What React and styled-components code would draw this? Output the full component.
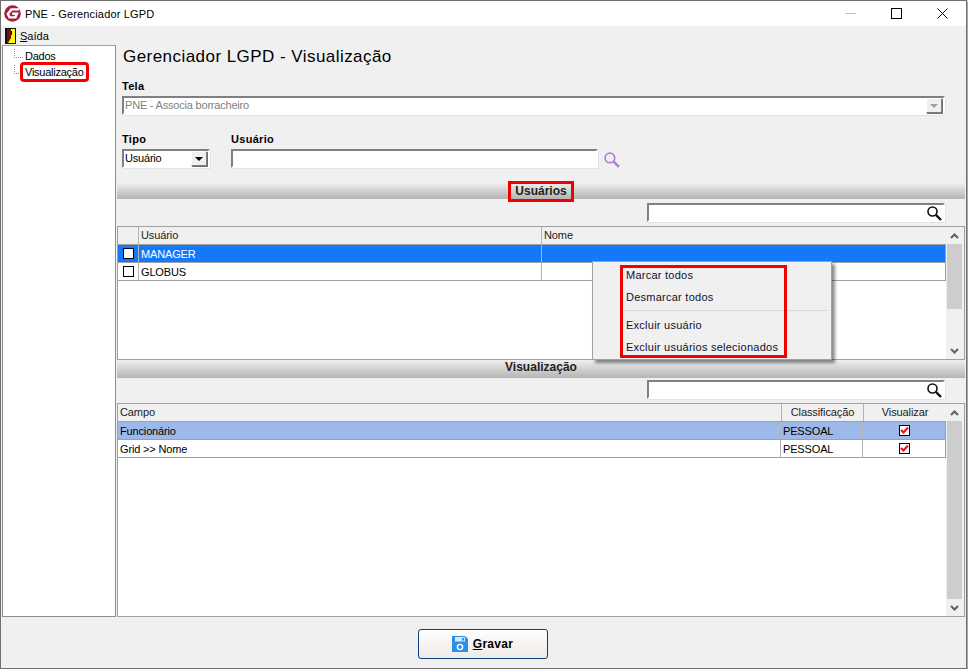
import styled, { createGlobalStyle } from 'styled-components';

const GlobalStyle = createGlobalStyle`
  html, body { margin: 0; padding: 0; background: #fff; }
  body { font-family: "Liberation Sans", Arial, sans-serif; font-size: 11px; color: #000; }
  * { box-sizing: border-box; }
`

const usuarios = ['MANAGER', 'GLOBUS'];
const campos = [
  { nome: 'Funcionário', classe: 'PESSOAL', marked: true },
  { nome: 'Grid >> Nome', classe: 'PESSOAL' },
];

function SearchIcon({ color = '#111', size = 16 }) {
  return (
    <svg width={size} height={size} viewBox="0 0 16 16" fill="none">
      <circle cx="6.5" cy="6.5" r="4.5" stroke={color} strokeWidth="1.6" />
      <path d="M10 10l5 5" stroke={color} strokeWidth="2.4" />
    </svg>
  );
}

function Logo() {
  return (
    <svg width="17" height="17" viewBox="0 0 17 17">
      <circle cx="8.5" cy="8.5" r="8.3" fill="#a3203c" />
      <path d="M15 4.4H7.4L3.8 9l1.8 3.4h5.8l1.6-3.6H8.2" fill="none" stroke="#fff" strokeWidth="2.4" />
    </svg>
  );
}

function ExitIcon() {
  return (
    <svg width="11" height="16" viewBox="0 0 11 16">
      <rect x="0" y="0" width="11" height="16" fill="#111" />
      <rect x="1" y="1" width="9" height="14" fill="#ffff00" />
      <path d="M1 1h5v9l-3 5H1z" fill="#7a1010" />
      <rect x="6" y="3" width="1" height="4" fill="#111" />
      <rect x="1" y="1" width="1" height="14" fill="#111" />
    </svg>
  );
}

function SaveIcon() {
  return (
    <svg width="16" height="16" viewBox="0 0 16 16">
      <path d="M0 0h13l3 3v13H0z" fill="#2f8fe6" />
      <rect x="3" y="1" width="10" height="4.5" fill="#d6e8f8" />
      <rect x="10" y="2" width="2" height="2.5" fill="#2f8fe6" />
      <circle cx="8" cy="11" r="2.6" fill="none" stroke="#fff" strokeWidth="1.4" />
    </svg>
  );
}

function Arrow({ up, color = '#606060' }) {
  return (
    <svg width="9" height="6" viewBox="0 0 9 6" fill="none">
      <path d={up ? 'M1 5l3.5-3.5L8 5' : 'M1 1l3.5 3.5L8 1'} stroke={color} strokeWidth="2" />
    </svg>
  );
}

function Check() {
  return (
    <CheckBox>
      <svg width="9" height="9" viewBox="0 0 9 9" fill="none">
        <path d="M1 4l2.5 2.5L8 1.5" stroke="#f01020" strokeWidth="2.2" />
      </svg>
    </CheckBox>
  );
}

function ScrollBar({ thumb }) {
  return (
    <Scroll>
      <ScrollButton><Arrow up /></ScrollButton>
      <ScrollTrack><ScrollThumb $height={thumb} /></ScrollTrack>
      <ScrollButton><Arrow /></ScrollButton>
    </Scroll>
  );
}

function App() {
  return (
    <Window>
      <GlobalStyle />
      <TitleBar>
        <Logo />
        <TitleText>PNE - Gerenciador LGPD</TitleText>
        <WindowButtons>
          <WinButton>
            <svg width="11" height="11" viewBox="0 0 11 11"><path d="M0 5.5h11" stroke="#c0c0c0" /></svg>
          </WinButton>
          <WinButton>
            <svg width="11" height="11" viewBox="0 0 11 11" fill="none"><rect x="0.5" y="0.5" width="10" height="10" stroke="#000" /></svg>
          </WinButton>
          <WinButton>
            <svg width="11" height="11" viewBox="0 0 11 11" fill="none"><path d="M0.5 0.5l10 10M10.5 0.5l-10 10" stroke="#000" /></svg>
          </WinButton>
        </WindowButtons>
      </TitleBar>
      <MenuBar>
        <ExitIcon />
        <MenuLabel><u>S</u>aída</MenuLabel>
      </MenuBar>
      <Body>
        <Tree>
          <TreeRow>
            <Connector />
            <TreeLabel>Dados</TreeLabel>
          </TreeRow>
          <TreeRow>
            <Connector />
            <TreeLabel $marked>Visualização</TreeLabel>
          </TreeRow>
        </Tree>
        <Main>
          <Heading>Gerenciador LGPD - Visualização</Heading>
          <FormArea>
            <FieldLabel>Tela</FieldLabel>
            <Field $width="823px">
              <DisabledText>PNE - Associa borracheiro</DisabledText>
              <DropButton $disabled />
            </Field>
            <FormRow>
              <Column>
                <FieldLabel>Tipo</FieldLabel>
                <Field $width="88px">
                  <span>Usuário</span>
                  <DropButton />
                </Field>
              </Column>
              <Column>
                <FieldLabel>Usuário</FieldLabel>
                <UserLine>
                  <Field $width="367px" />
                  <SearchIcon color="#b57ad6" size="17" />
                </UserLine>
              </Column>
            </FormRow>
          </FormArea>

          <SectionBar><SectionText $marked>Usuários</SectionText></SectionBar>
          <FilterRow>
            <Field $width="298px">
              <span />
              <SearchIcon />
            </Field>
          </FilterRow>
          <Grid $height="134px">
            <GridBody>
              <HeaderRow $columns="21px 403px 1fr">
                <HeaderCell />
                <HeaderCell $left>Usuário</HeaderCell>
                <HeaderCell $left>Nome</HeaderCell>
              </HeaderRow>
              {usuarios.map((nome, i) => (
                <DataRow key={nome} $columns="21px 403px 1fr" $bg={i === 0 ? '#1478fa' : '#fff'} $color={i === 0 ? '#fff' : '#000'}>
                  <Cell $center><EmptyBox /></Cell>
                  <Cell>{nome}</Cell>
                  <Cell />
                </DataRow>
              ))}
            </GridBody>
            <ScrollBar thumb="65px" />
            <ContextMenu>
              <MenuMarks>
                <MenuItem>Marcar todos</MenuItem>
                <MenuItem>Desmarcar todos</MenuItem>
                <MenuSeparator />
                <MenuItem>Excluir usuário</MenuItem>
                <MenuItem>Excluir usuários selecionados</MenuItem>
              </MenuMarks>
            </ContextMenu>
          </Grid>

          <SectionBar $small><SectionText>Visualização</SectionText></SectionBar>
          <FilterRow $short>
            <Field $width="298px">
              <span />
              <SearchIcon />
            </Field>
          </FilterRow>
          <Grid $height="214px">
            <GridBody>
              <HeaderRow $columns="1fr 82px 82px">
                <HeaderCell $left>Campo</HeaderCell>
                <HeaderCell>Classificação</HeaderCell>
                <HeaderCell>Visualizar</HeaderCell>
              </HeaderRow>
              {campos.map((campo) => (
                <DataRow key={campo.nome} $columns="1fr 82px 82px" $bg={campo.marked ? '#9db9e9' : '#fff'}>
                  <Cell>{campo.nome}</Cell>
                  <Cell>{campo.classe}</Cell>
                  <Cell $center><Check /></Cell>
                </DataRow>
              ))}
            </GridBody>
            <ScrollBar thumb="100%" />
          </Grid>
        </Main>
      </Body>
      <Footer>
        <SaveButton>
          <SaveIcon />
          <span><u>G</u>ravar</span>
        </SaveButton>
      </Footer>
    </Window>
  );
}

const Window = styled.div`
  width: 967px;
  height: 669px;
  display: flex;
  flex-direction: column;
  background: #f0f0f0;
  border: 1px solid #707070;
  box-shadow: 1px 1px 2px rgba(0, 0, 0, 0.5);
  overflow: hidden;
`

const TitleBar = styled.div`
  height: 25px;
  flex: none;
  display: flex;
  align-items: center;
  padding-left: 3px;
  background: #fff;
`

const TitleText = styled.span`
  margin-left: 4px;
  font-size: 11px;
  letter-spacing: 0.15px;
`

const WindowButtons = styled.div`
  margin-left: auto;
  display: flex;
  margin-right: 1px;
`

const WinButton = styled.div`
  width: 46px;
  height: 25px;
  display: flex;
  align-items: center;
  justify-content: center;
`

const MenuBar = styled.div`
  height: 19px;
  flex: none;
  display: flex;
  align-items: center;
  gap: 4px;
  padding-left: 4px;
`

const MenuLabel = styled.span`
  font-size: 11px;
`

const Body = styled.div`
  height: 572px;
  flex: none;
  display: flex;
  padding-left: 1px;
`

const Tree = styled.div`
  width: 114px;
  height: 572px;
  flex: none;
  padding: 3px 0 0 11px;
  background: #fff;
  border: 1px solid #8c8c8c;
  border-top-color: #a0a0a0;
`

const TreeRow = styled.div`
  height: 16px;
  display: flex;
  align-items: flex-start;
`

const Connector = styled.span`
  width: 9px;
  height: 9px;
  flex: none;
  border-left: 1px dotted #909090;
  border-bottom: 1px dotted #909090;
`

const TreeLabel = styled.span`
  padding: 0 2px;
  line-height: 14px;
  font-size: 11px;
  letter-spacing: -0.25px;
  outline: ${(p) => (p.$marked ? '3px solid #f00000' : 'none')};
  border-radius: 1px;
`

const Main = styled.div`
  width: 848px;
  flex: none;
  margin-left: 1px;
  display: flex;
  flex-direction: column;
`

const Heading = styled.h1`
  margin: 2px 0 0 6px;
  height: 21px;
  font-size: 17px;
  line-height: 20px;
  font-weight: 400;
  letter-spacing: 0.45px;
`

const FormArea = styled.div`
  height: 116px;
  padding: 11px 0 0 5px;
`

const FieldLabel = styled.div`
  height: 14px;
  line-height: 14px;
  font-size: 11px;
  font-weight: 700;
  letter-spacing: 0.3px;
`

const Field = styled.div`
  width: ${(p) => p.$width};
  height: 19px;
  margin-top: 3px;
  padding: 0 1px 0 1px;
  display: flex;
  align-items: center;
  justify-content: space-between;
  background: #fff;
  font-size: 11px;
  letter-spacing: -0.2px;
  border: 2px solid;
  border-color: #808080 #fff #fff #808080;
  box-shadow: 1px 1px 0 #e4e4e4;
`

const DisabledText = styled.span`
  color: #808080;
`

const DropButton = styled.span`
  width: 16px;
  height: 15px;
  flex: none;
  display: block;
  background: #f0f0f0;
  border: 1px solid;
  border-color: #fff #808080 #808080 #fff;
  box-shadow: 1px 1px 0 #707070;
  position: relative;
  &::after {
    content: '';
    position: absolute;
    left: 3px;
    top: 5px;
    border-left: 4px solid transparent;
    border-right: 4px solid transparent;
    border-top: 4px solid ${(p) => (p.$disabled ? '#a0a0a0' : '#000')};
  }
`

const FormRow = styled.div`
  margin-top: 17px;
  display: flex;
  gap: 21px;
`

const Column = styled.div`
  display: flex;
  flex-direction: column;
`

const UserLine = styled.div`
  display: flex;
  align-items: flex-end;
  gap: 5px;
`

const SectionBar = styled.div`
  height: ${(p) => (p.$small ? '18px' : '16px')};
  flex: none;
  display: flex;
  align-items: center;
  justify-content: center;
  padding-bottom: ${(p) => (p.$small ? '3px' : '0')};
  background: linear-gradient(#efefef, #b4b4b4);
`

const SectionText = styled.span`
  padding: 0 4px;
  font-size: 12px;
  font-weight: 700;
  line-height: 15px;
  color: #222;
  outline: ${(p) => (p.$marked ? '3px solid #f00000' : 'none')};
`

const FilterRow = styled.div`
  height: ${(p) => (p.$short ? '25px' : '27px')};
  flex: none;
  display: flex;
  justify-content: flex-end;
  padding-right: 20px;
  padding-top: ${(p) => (p.$short ? '2px' : '4px')};
  & > div { margin-top: 0; }
`

const Grid = styled.div`
  position: relative;
  height: ${(p) => p.$height};
  flex: none;
  display: flex;
  background: #fff;
  border: 1px solid #a0a0a0;
`

const GridBody = styled.div`
  flex: 1;
  min-width: 0;
`

const HeaderRow = styled.div`
  display: grid;
  grid-template-columns: ${(p) => p.$columns};
  height: 18px;
  background: #f0f0f0;
  border-bottom: 1px solid #a0a0a0;
`

const HeaderCell = styled.div`
  padding: 0 2px;
  line-height: 17px;
  font-size: 11px;
  letter-spacing: -0.1px;
  color: #222;
  text-align: ${(p) => (p.$left ? 'left' : 'center')};
  border-right: 1px solid #b4b4b4;
  &:last-child { border-right: none; }
`

const DataRow = styled.div`
  display: grid;
  grid-template-columns: ${(p) => p.$columns};
  height: 18px;
  background: ${(p) => p.$bg};
  color: ${(p) => p.$color || '#000'};
  border-bottom: 1px solid #a0a0a0;
  border-right: 1px solid #a0a0a0;
`

const Cell = styled.div`
  padding: 0 2px;
  display: flex;
  align-items: center;
  justify-content: ${(p) => (p.$center ? 'center' : 'flex-start')};
  font-size: 11px;
  letter-spacing: -0.15px;
  border-right: 1px solid #b4b4b4;
  &:last-child { border-right: none; }
`

const EmptyBox = styled.span`
  width: 11px;
  height: 11px;
  background: #fff;
  border: 1px solid #000;
`

const CheckBox = styled.span`
  width: 11px;
  height: 11px;
  display: flex;
  align-items: center;
  justify-content: center;
  background: #fff;
  border: 1px solid #000;
`

const Scroll = styled.div`
  width: 18px;
  flex: none;
  display: flex;
  flex-direction: column;
  padding: 0 2px 0 1px;
  background: #f0f0f0;
`

const ScrollButton = styled.div`
  height: 17px;
  flex: none;
  display: flex;
  align-items: center;
  justify-content: center;
`

const ScrollTrack = styled.div`
  flex: 1;
  min-height: 0;
`

const ScrollThumb = styled.div`
  height: ${(p) => p.$height};
  background: #cdcdcd;
`

const ContextMenu = styled.div`
  position: absolute;
  left: 474px;
  top: 34px;
  width: 240px;
  height: 99px;
  padding: 3px 0 0 27px;
  background: #f0f0f0;
  border: 1px solid #a0a0a0;
  box-shadow: 3px 3px 3px rgba(0, 0, 0, 0.45);
`

const MenuMarks = styled.div`
  width: 167px;
  height: 93px;
  outline: 3px solid #f00000;
  outline-offset: -3px;
  padding: 1px 0 0 6px;
`

const MenuItem = styled.div`
  height: 22px;
  line-height: 19px;
  font-size: 11px;
  letter-spacing: 0.25px;
  color: #101030;
`

const MenuSeparator = styled.div`
  height: 1px;
  margin: 0 0 5px -2px;
  width: 203px;
  background: #d7d7d7;
`

const Footer = styled.div`
  flex: 1;
  display: flex;
  align-items: flex-start;
  justify-content: center;
  padding: 12px 2px 0 0;
`

const SaveButton = styled.button`
  width: 130px;
  height: 30px;
  display: flex;
  align-items: center;
  justify-content: center;
  gap: 5px;
  background: linear-gradient(#fff, #eeeae6);
  border: 1px solid #0a3f78;
  border-radius: 3px;
  font-family: "Liberation Sans", Arial, sans-serif;
  font-size: 12px;
  font-weight: 700;
  letter-spacing: 0.3px;
`

export default App;
